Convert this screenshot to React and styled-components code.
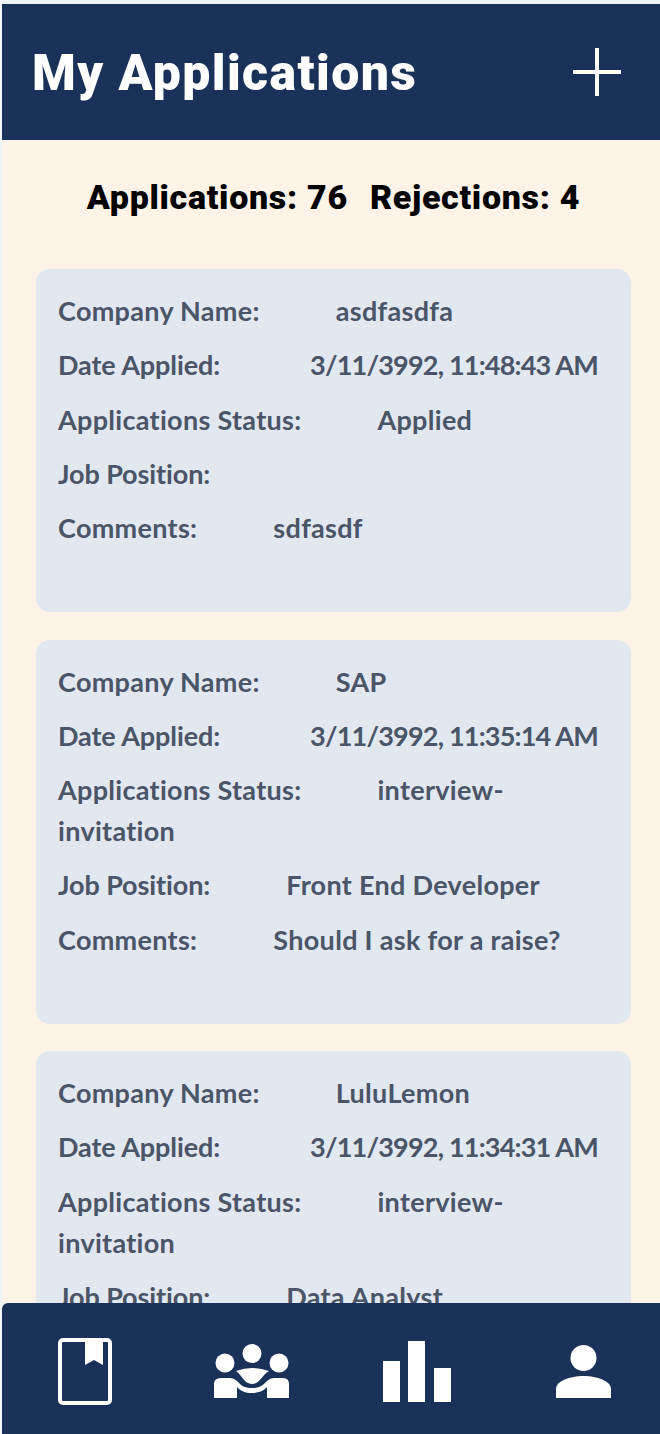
import React from 'react';
import styled, { createGlobalStyle } from 'styled-components';

const GlobalStyle = createGlobalStyle`
  html, body {
    margin: 0;
    padding: 0;
    background: #f1f3f4;
  }
  * {
    box-sizing: border-box;
  }
`;

const Page = styled.div`
  display: flex;
  flex-direction: column;
  height: 1434px;
  margin-left: 2px;
  padding-top: 4px;
  overflow: hidden;
`;

const Header = styled.header`
  flex: none;
  display: flex;
  align-items: center;
  justify-content: space-between;
  height: 136px;
  padding: 0 39px 0 30px;
  background: #1a325a;
`;

const Title = styled.h1`
  margin: 2px 0 0;
  font-family: "Roboto", "Liberation Sans", sans-serif;
  font-weight: 900;
  font-size: 50px;
  letter-spacing: 1.4px;
  color: #fff;
`;

const Body = styled.main`
  flex: 1;
  min-height: 0;
  overflow: hidden;
  background: #fdf3e7;
`;

const Stats = styled.div`
  display: flex;
  justify-content: center;
  gap: 22px;
  height: 129px;
  padding: 37px 0 0 5px;
  font-family: "Roboto", "Liberation Sans", sans-serif;
  font-weight: 900;
  font-size: 34px;
  letter-spacing: 0.7px;
  line-height: 40px;
  color: #000;
`;

const CardList = styled.div`
  display: flex;
  flex-direction: column;
  gap: 27.5px;
  padding: 0 29px 0 34px;
`;

const Card = styled.section`
  padding: 21px 22px 50.75px;
  border-radius: 14px;
  background: #e2e8f0;
  font-family: "Lato", "Liberation Sans", sans-serif;
  font-weight: 700;
  font-size: 27px;
  letter-spacing: 0.3px;
  line-height: 41px;
  color: #4a5568;
`;

const Row = styled.p`
  margin: 0 0 13.25px;
`;

const Label = styled.span`
  letter-spacing: ${(p) => (p.$tight ? '-0.1px' : 'inherit')};
`;

const Value = styled.span`
  margin-left: 76px;
`;

const DateValue = styled.span`
  margin-left: 90px;
  letter-spacing: -0.8px;
  white-space: nowrap;
`;

const Nav = styled.nav`
  flex: none;
  display: grid;
  grid-template-columns: repeat(4, 166px);
  align-items: center;
  justify-items: center;
  height: 131px;
  padding-top: 5px;
  border-radius: 6px 0 0 0;
  background: #1a325a;
`;

const applications = [
  { company: 'asdfasdfa', date: '3/11/3992, 11:48:43 AM', status: 'Applied', position: '', comments: 'sdfasdf' },
  { company: 'SAP', date: '3/11/3992, 11:35:14 AM', status: 'interview-invitation', position: 'Front End Developer', comments: 'Should I ask for a raise?' },
  { company: 'LuluLemon', date: '3/11/3992, 11:34:31 AM', status: 'interview-invitation', position: 'Data Analyst', comments: '' },
];

const PlusIcon = () => (
  <svg width="48" height="48" viewBox="0 0 48 48" fill="#fff">
    <rect x="0" y="22" width="48" height="4" />
    <rect x="22" y="0" width="4" height="48" />
  </svg>
);

const BookIcon = () => (
  <svg width="54" height="67" viewBox="0 0 54 67">
    <rect x="2" y="2" width="50" height="63" rx="3" fill="none" stroke="#fff" strokeWidth="4" />
    <path d="M27 2h18v25l-9-5-9 5z" fill="#fff" />
  </svg>
);

const PeopleIcon = () => (
  <svg width="75" height="54" viewBox="0 0 75 54" fill="#fff">
    <circle cx="38" cy="9.5" r="9.5" />
    <circle cx="11" cy="19" r="9.5" />
    <circle cx="65" cy="19" r="9.5" />
    <path d="M22 27Q38 21 55 27C48 31 46 40 38 40C30 40 28 31 22 27z" />
    <path d="M0 54V40Q0 34 7 34H16Q20 34 23 37C28 42 30 44 38 44C46 44 48 42 53 37Q56 34 60 34H69Q75 34 75 40V54H53V43C49 47 45 49 38 49C31 49 27 47 23 43V54z" />
  </svg>
);

const BarsIcon = () => (
  <svg width="68" height="61" viewBox="0 0 68 61" fill="#fff">
    <rect x="0" y="20" width="17" height="41" />
    <rect x="25" y="0" width="17" height="61" />
    <rect x="51" y="27" width="17" height="34" />
  </svg>
);

const PersonIcon = () => (
  <svg width="55" height="53" viewBox="0 0 55 53" fill="#fff">
    <circle cx="27.5" cy="13" r="13" />
    <path d="M0 53V44C0 36 14 31 27.5 31S55 36 55 44V53z" />
  </svg>
);

export default function App() {
  return (
    <>
      <GlobalStyle />
      <Page>
        <Header>
          <Title>My Applications</Title>
          <PlusIcon />
        </Header>
        <Body>
          <Stats>
            <span>Applications: 76</span>
            <span>Rejections: 4</span>
          </Stats>
          <CardList>
            {applications.map((app) => (
              <Card key={app.date}>
                <Row><Label>Company Name:</Label><Value>{app.company}</Value></Row>
                <Row><Label $tight>Date Applied:</Label><DateValue>{app.date}</DateValue></Row>
                <Row><Label>Applications Status:</Label><Value>{app.status}</Value></Row>
                <Row><Label $tight>Job Position:</Label><Value>{app.position}</Value></Row>
                <Row><Label>Comments:</Label><Value>{app.comments}</Value></Row>
              </Card>
            ))}
          </CardList>
        </Body>
        <Nav>
          <BookIcon />
          <PeopleIcon />
          <BarsIcon />
          <PersonIcon />
        </Nav>
      </Page>
    </>
  );
}
